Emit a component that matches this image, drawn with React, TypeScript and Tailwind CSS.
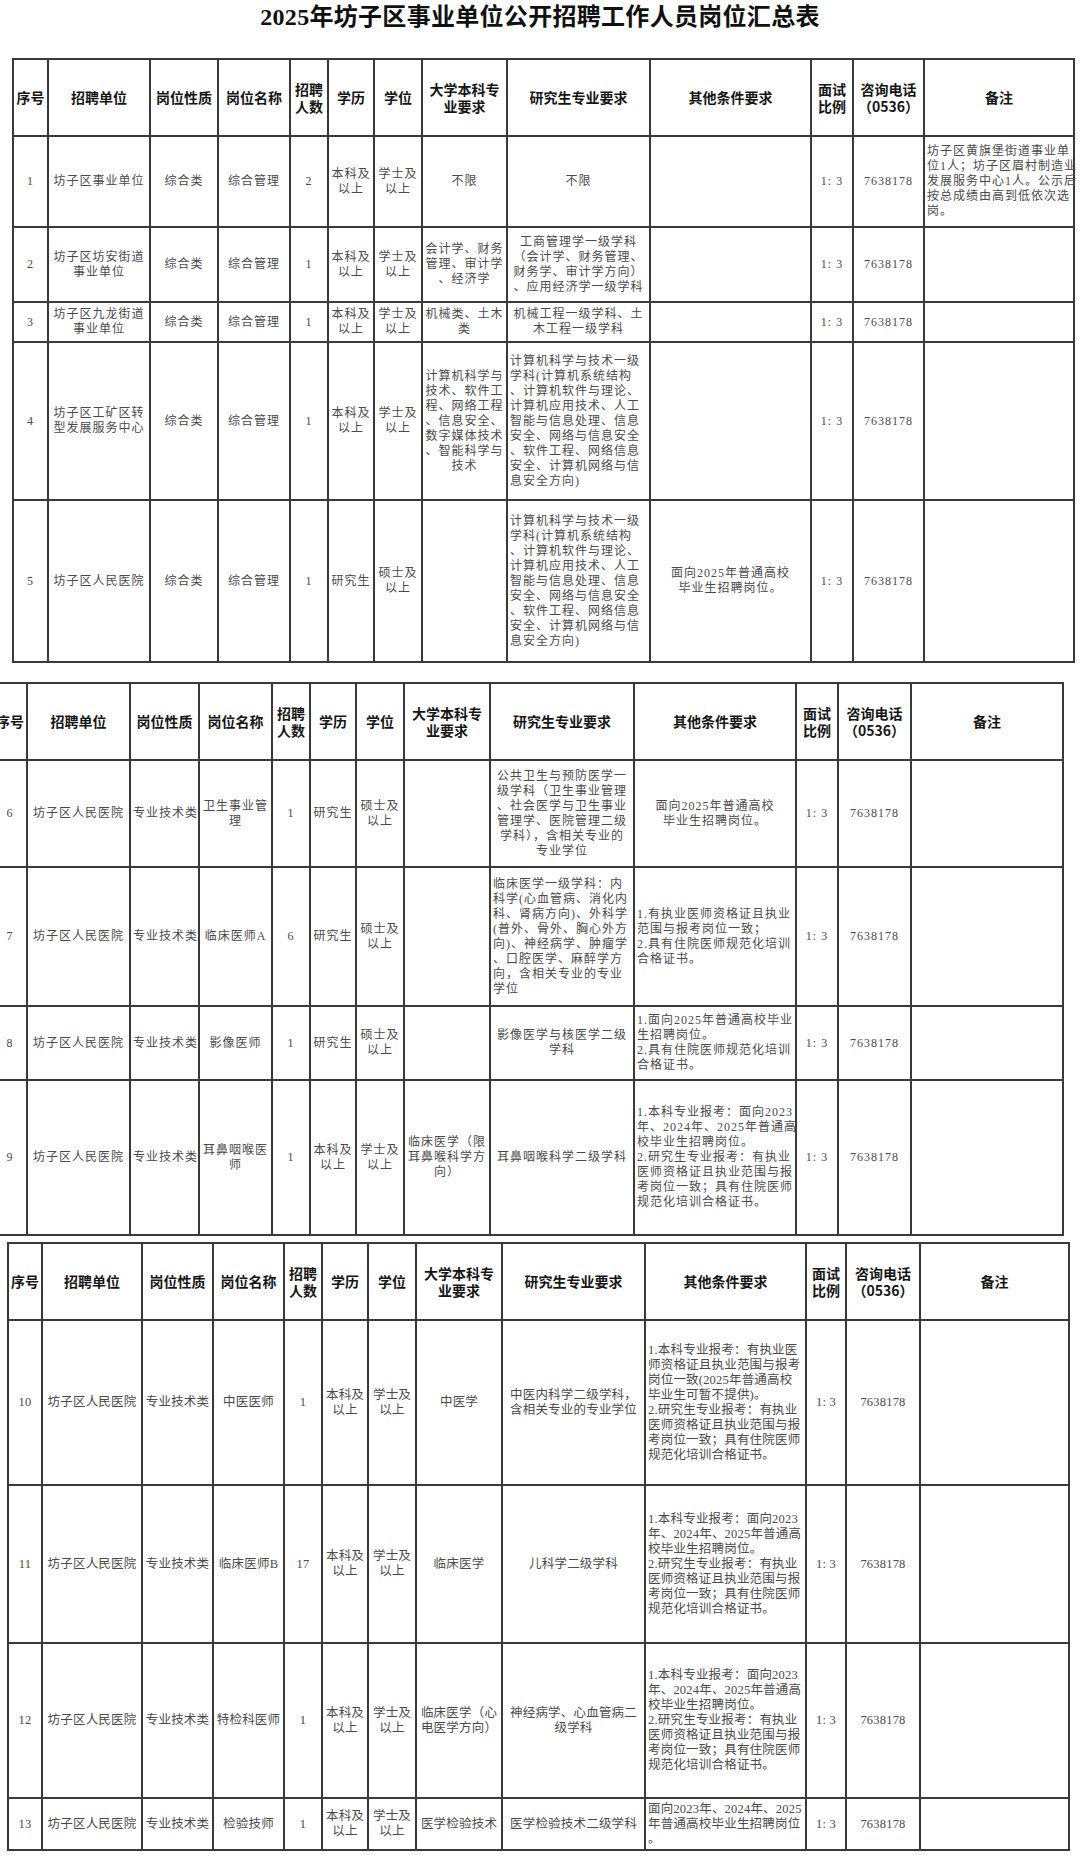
import React from "react";

type CellSpec = string | { t: string; l: true };
const L = (t: string): CellSpec => ({ t, l: true });

const HEAD = [
  "序号",
  "招聘单位",
  "岗位性质",
  "岗位名称",
  "招聘|人数",
  "学历",
  "学位",
  "大学本科专|业要求",
  "研究生专业要求",
  "其他条件要求",
  "面试|比例",
  "咨询电话|（0536）",
  "备注",
];

const CS_GRAD =
  "计算机科学与技术一级|学科(计算机系统结构|、计算机软件与理论、|计算机应用技术、人工|智能与信息处理、信息|安全、网络与信息安全|、软件工程、网络信息|安全、计算机网络与信|息安全方向)";

const OTHER_A =
  "1.本科专业报考：面向2023|年、2024年、2025年普通高|校毕业生招聘岗位。|2.研究生专业报考：有执业|医师资格证且执业范围与报|考岗位一致；具有住院医师|规范化培训合格证书。";

const T1_ROWS: { h: string; cells: CellSpec[] }[] = [
  {
    h: "h-[91px]",
    cells: [
      "1",
      "坊子区事业单位",
      "综合类",
      "综合管理",
      "2",
      "本科及|以上",
      "学士及|以上",
      "不限",
      "不限",
      "",
      "1: 3",
      "7638178",
      L("坊子区黄旗堡街道事业单|位1人；坊子区眉村制造业|发展服务中心1人。公示后|按总成绩由高到低依次选|岗。"),
    ],
  },
  {
    h: "h-[75px]",
    cells: [
      "2",
      "坊子区坊安街道|事业单位",
      "综合类",
      "综合管理",
      "1",
      "本科及|以上",
      "学士及|以上",
      "会计学、财务|管理、审计学|、经济学",
      "工商管理学一级学科|（会计学、财务管理、|财务学、审计学方向）|、应用经济学一级学科",
      "",
      "1: 3",
      "7638178",
      "",
    ],
  },
  {
    h: "h-[40px]",
    cells: [
      "3",
      "坊子区九龙街道|事业单位",
      "综合类",
      "综合管理",
      "1",
      "本科及|以上",
      "学士及|以上",
      "机械类、土木|类",
      "机械工程一级学科、土|木工程一级学科",
      "",
      "1: 3",
      "7638178",
      "",
    ],
  },
  {
    h: "h-[158px]",
    cells: [
      "4",
      "坊子区工矿区转|型发展服务中心",
      "综合类",
      "综合管理",
      "1",
      "本科及|以上",
      "学士及|以上",
      "计算机科学与|技术、软件工|程、网络工程|、信息安全、|数字媒体技术|、智能科学与|技术",
      L(CS_GRAD),
      "",
      "1: 3",
      "7638178",
      "",
    ],
  },
  {
    h: "h-[162px]",
    cells: [
      "5",
      "坊子区人民医院",
      "综合类",
      "综合管理",
      "1",
      "研究生",
      "硕士及|以上",
      "",
      L(CS_GRAD),
      "面向2025年普通高校|毕业生招聘岗位。",
      "1: 3",
      "7638178",
      "",
    ],
  },
];

const T2_ROWS: { h: string; cells: CellSpec[] }[] = [
  {
    h: "h-[107px]",
    cells: [
      "6",
      "坊子区人民医院",
      "专业技术类",
      "卫生事业管|理",
      "1",
      "研究生",
      "硕士及|以上",
      "",
      "公共卫生与预防医学一|级学科（卫生事业管理|、社会医学与卫生事业|管理学、医院管理二级|学科），含相关专业的|专业学位",
      "面向2025年普通高校|毕业生招聘岗位。",
      "1: 3",
      "7638178",
      "",
    ],
  },
  {
    h: "h-[139px]",
    cells: [
      "7",
      "坊子区人民医院",
      "专业技术类",
      "临床医师A",
      "6",
      "研究生",
      "硕士及|以上",
      "",
      L("临床医学一级学科：内|科学(心血管病、消化内|科、肾病方向)、外科学|(普外、骨外、胸心外方|向)、神经病学、肿瘤学|、口腔医学、麻醉学方|向，含相关专业的专业|学位"),
      L("1.有执业医师资格证且执业|范围与报考岗位一致；|2.具有住院医师规范化培训|合格证书。"),
      "1: 3",
      "7638178",
      "",
    ],
  },
  {
    h: "h-[74px]",
    cells: [
      "8",
      "坊子区人民医院",
      "专业技术类",
      "影像医师",
      "1",
      "研究生",
      "硕士及|以上",
      "",
      "影像医学与核医学二级|学科",
      L("1.面向2025年普通高校毕业|生招聘岗位。|2.具有住院医师规范化培训|合格证书。"),
      "1: 3",
      "7638178",
      "",
    ],
  },
  {
    h: "h-[155px]",
    cells: [
      "9",
      "坊子区人民医院",
      "专业技术类",
      "耳鼻咽喉医|师",
      "1",
      "本科及|以上",
      "学士及|以上",
      "临床医学（限|耳鼻喉科学方|向）",
      "耳鼻咽喉科学二级学科",
      L(OTHER_A),
      "1: 3",
      "7638178",
      "",
    ],
  },
];

const T3_ROWS: { h: string; cells: CellSpec[] }[] = [
  {
    h: "h-[165px]",
    cells: [
      "10",
      "坊子区人民医院",
      "专业技术类",
      "中医医师",
      "1",
      "本科及|以上",
      "学士及|以上",
      "中医学",
      "中医内科学二级学科，|含相关专业的专业学位",
      L("1.本科专业报考：有执业医|师资格证且执业范围与报考|岗位一致(2025年普通高校|毕业生可暂不提供)。|2.研究生专业报考：有执业|医师资格证且执业范围与报|考岗位一致；具有住院医师|规范化培训合格证书。"),
      "1: 3",
      "7638178",
      "",
    ],
  },
  {
    h: "h-[158px]",
    cells: [
      "11",
      "坊子区人民医院",
      "专业技术类",
      "临床医师B",
      "17",
      "本科及|以上",
      "学士及|以上",
      "临床医学",
      "儿科学二级学科",
      L(OTHER_A),
      "1: 3",
      "7638178",
      "",
    ],
  },
  {
    h: "h-[155px]",
    cells: [
      "12",
      "坊子区人民医院",
      "专业技术类",
      "特检科医师",
      "1",
      "本科及|以上",
      "学士及|以上",
      "临床医学（心|电医学方向）",
      "神经病学、心血管病二|级学科",
      L(OTHER_A),
      "1: 3",
      "7638178",
      "",
    ],
  },
  {
    h: "h-[52px]",
    cells: [
      "13",
      "坊子区人民医院",
      "专业技术类",
      "检验技师",
      "1",
      "本科及|以上",
      "学士及|以上",
      "医学检验技术",
      "医学检验技术二级学科",
      L("面向2023年、2024年、2025|年普通高校毕业生招聘岗位|。"),
      "1: 3",
      "7638178",
      "",
    ],
  },
];

const T1W = ["w-[35px]", "w-[102px]", "w-[68px]", "w-[72px]", "w-[38px]", "w-[46px]", "w-[48px]", "w-[85px]", "w-[143px]", "w-[161px]", "w-[42px]", "w-[71px]", "w-[150px]"];
const T2W = ["w-[34px]", "w-[103px]", "w-[69px]", "w-[73px]", "w-[38px]", "w-[46px]", "w-[48px]", "w-[86px]", "w-[144px]", "w-[162px]", "w-[42px]", "w-[73px]", "w-[152px]"];
const T3W = ["w-[34px]", "w-[100px]", "w-[71px]", "w-[71px]", "w-[38px]", "w-[46px]", "w-[48px]", "w-[86px]", "w-[143px]", "w-[161px]", "w-[40px]", "w-[74px]", "w-[149px]"];

function BodyCell({ spec, bodyClass }: { spec: CellSpec; bodyClass: string }) {
  const text = typeof spec === "string" ? spec : spec.t;
  const left = typeof spec !== "string";
  const lines = text ? text.split("|") : [];
  return (
    <td
      className={`border-2 border-[#3a3a3a] px-[2px] align-middle text-[#4a4a4a] leading-[15px] ${bodyClass} ${
        left ? "text-left" : "text-center"
      }`}
    >
      {lines.map((ln, i) => (
        <div key={i} className="whitespace-nowrap">
          {ln}
        </div>
      ))}
    </td>
  );
}

function Sheet({
  widths,
  rows,
  tableClass,
  bodyClass,
}: {
  widths: string[];
  rows: { h: string; cells: CellSpec[] }[];
  tableClass: string;
  bodyClass: string;
}) {
  return (
    <table className={`table-fixed border-collapse ${tableClass}`}>
      <colgroup>
        {widths.map((w, i) => (
          <col key={i} className={w} />
        ))}
      </colgroup>
      <thead>
        <tr className="h-[77px]">
          {HEAD.map((h, i) => (
            <th
              key={i}
              className="border-2 border-[#3a3a3a] px-[1px] align-middle text-center text-[14px] leading-[17px] font-bold text-[#161616] [font-family:'Noto_Sans_CJK_SC',sans-serif]"
            >
              {h.split("|").map((ln, j) => (
                <div key={j} className="whitespace-nowrap">
                  {ln}
                </div>
              ))}
            </th>
          ))}
        </tr>
      </thead>
      <tbody>
        {rows.map((r, i) => (
          <tr key={i} className={r.h}>
            {r.cells.map((c, j) => (
              <BodyCell key={j} spec={c} bodyClass={bodyClass} />
            ))}
          </tr>
        ))}
      </tbody>
    </table>
  );
}

export default function App() {
  return (
    <div className="w-[1080px] h-[1858px] overflow-hidden bg-white [font-family:'Liberation_Serif','Noto_Sans_CJK_SC',serif]">
      <div className="h-[58px] flex justify-center pt-[2px]">
        <h1 className="text-[24px] leading-[30px] font-bold text-[#111] tracking-[0.3px]">
          2025年坊子区事业单位公开招聘工作人员岗位汇总表
        </h1>
      </div>
      <Sheet
        widths={T1W}
        rows={T1_ROWS}
        tableClass="w-[1061px] ml-[12px]"
        bodyClass="text-[12px] tracking-[1px]"
      />
      <Sheet
        widths={T2W}
        rows={T2_ROWS}
        tableClass="w-[1070px] -ml-[8px] mt-[19px]"
        bodyClass="text-[12px] tracking-[1px]"
      />
      <Sheet
        widths={T3W}
        rows={T3_ROWS}
        tableClass="w-[1061px] ml-[7px] mt-[6px]"
        bodyClass="text-[12.5px] tracking-[0.2px]"
      />
    </div>
  );
}
